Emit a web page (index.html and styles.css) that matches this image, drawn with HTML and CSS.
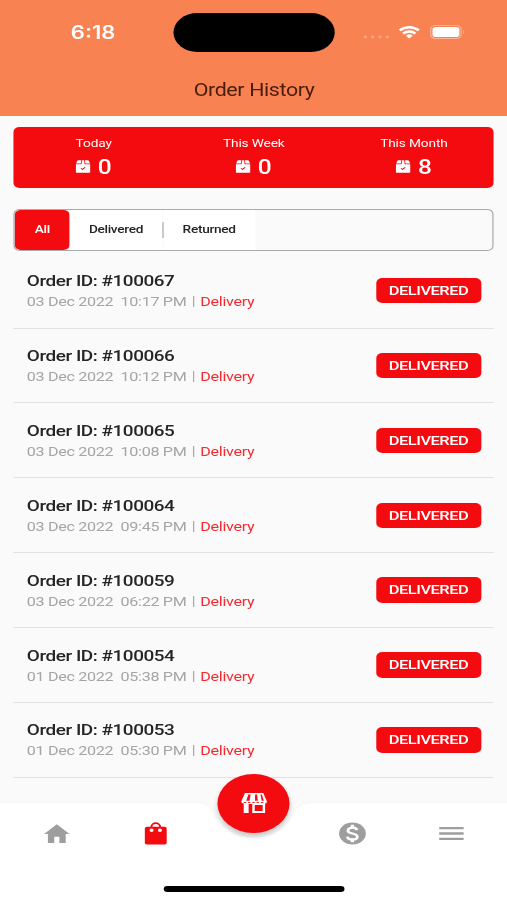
FILE: index.html
```html
<!DOCTYPE html>
<html lang="en">
<head>
<meta charset="utf-8">
<title>Order History</title>
<link rel="stylesheet" href="styles.css">
</head>
<body>
<svg class="defs" width="0" height="0">
  <symbol id="box" viewBox="0 0 12 13">
    <path fill="#fff" d="M2 0.300h2.600l-.5 3.300H0.300L1.200 1Q1.400 .3 2 .3zM7.400 .3H10q.6 0 .8.7l.9 2.600H7.900zM0 4.200h12v7.600q0 .9-.9.9H.9Q0 12.700 0 11.800zM5.200 .3h1.600l.5 4.100h-2.600z"/>
    <path fill="none" stroke="#f40b10" stroke-width=".9" d="M4.300 8.300l1.200 1 2.200-2"/>
  </symbol>
</svg>
<div class="screen">
  <header class="top">
    <div class="status">
      <span class="time">6:18</span>
      <div class="island"></div>
      <div class="signals">
        <svg class="dots" width="22" height="4" viewBox="0 0 22 4"><g fill="#fff" opacity=".3"><circle cx="2" cy="2" r="1.400"/><circle cx="8" cy="2" r="1.400"/><circle cx="14" cy="2" r="1.400"/><circle cx="20" cy="2" r="1.400"/></g></svg>
        <svg class="wifi" width="18" height="14" viewBox="0 0 18 14"><g fill="none" stroke="#fff" stroke-width="2.500"><path d="M1.200 5.300a11.200 11.200 0 0 1 15.600 0"/><path d="M4 8.600a7.200 7.200 0 0 1 10 0"/></g><path fill="#fff" d="M9 13.500L6.200 10.700a4 4 0 0 1 5.600 0z"/></svg>
        <svg class="battery" width="29" height="14" viewBox="0 0 29 14"><rect x=".5" y=".5" width="25" height="13" rx="4" fill="none" stroke="#fff" opacity=".4"/><rect x="2" y="2" width="22" height="10" rx="2.800" fill="#fff"/><path d="M27 5q1.600 2 0 4z" fill="#fff" opacity=".5"/></svg>
      </div>
    </div>
    <h1>Order History</h1>
  </header>
  <main>
    <section class="stats">
      <div class="stat"><span class="label">Today</span><span class="value"><svg width="12" height="13"><use href="#box"/></svg>0</span></div>
      <div class="stat"><span class="label">This Week</span><span class="value"><svg width="12" height="13"><use href="#box"/></svg>0</span></div>
      <div class="stat"><span class="label">This Month</span><span class="value"><svg width="12" height="13"><use href="#box"/></svg>8</span></div>
    </section>
    <nav class="filters">
      <span class="tab active">All</span><span class="tab delivered">Delivered</span><i></i><span class="tab returned">Returned</span>
    </nav>
    <ul class="orders">
      <li><div><b>Order ID: #100067</b><p>03 Dec 2022&nbsp; 10:17 PM <i></i> <em>Delivery</em></p></div><span class="badge">DELIVERED</span></li>
      <li><div><b>Order ID: #100066</b><p>03 Dec 2022&nbsp; 10:12 PM <i></i> <em>Delivery</em></p></div><span class="badge">DELIVERED</span></li>
      <li><div><b>Order ID: #100065</b><p>03 Dec 2022&nbsp; 10:08 PM <i></i> <em>Delivery</em></p></div><span class="badge">DELIVERED</span></li>
      <li><div><b>Order ID: #100064</b><p>03 Dec 2022&nbsp; 09:45 PM <i></i> <em>Delivery</em></p></div><span class="badge">DELIVERED</span></li>
      <li><div><b>Order ID: #100059</b><p>03 Dec 2022&nbsp; 06:22 PM <i></i> <em>Delivery</em></p></div><span class="badge">DELIVERED</span></li>
      <li><div><b>Order ID: #100054</b><p>01 Dec 2022&nbsp; 05:38 PM <i></i> <em>Delivery</em></p></div><span class="badge">DELIVERED</span></li>
      <li><div><b>Order ID: #100053</b><p>01 Dec 2022&nbsp; 05:30 PM <i></i> <em>Delivery</em></p></div><span class="badge">DELIVERED</span></li>
    </ul>
  </main>
  <footer class="bottom">
    <svg class="notch" width="415" height="97" viewBox="0 0 415 97"><path fill="#fff" d="M0 0H156.700Q171.700 0 174.100 9A34.800 34.800 0 0 0 241.300 9Q243.700 0 258.700 0H415V97H0z"/></svg>
    <div class="items">
      <svg width="25" height="25" viewBox="0 0 24 24"><path fill="#9e9e9e" d="M10 21v-6h4v6h5v-8.500h3L12 3 2 12.500h3V21z"/></svg>
      <svg width="25" height="25" viewBox="0 0 24 24"><path fill="#f40b10" fill-rule="evenodd" d="M19 5.500H16.200A4.200 4.200 0 0 0 7.800 5.500H5Q3.400 5.500 3.400 7.100V20.900Q3.400 22.500 5 22.500H19Q20.600 22.500 20.600 20.900V7.100Q20.600 5.500 19 5.500zM12 2.900a2.600 2.600 0 0 1 2.600 2.600H9.400a2.600 2.600 0 0 1 2.600-2.600zM8.700 7.300a1.600 1.600 0 1 1 0 3.200 1.600 1.600 0 0 1 0-3.200zM15.300 7.300a1.600 1.600 0 1 1 0 3.200 1.600 1.600 0 0 1 0-3.200z"/></svg>
      <span></span>
      <svg width="25" height="25" viewBox="0 0 24 24"><circle cx="12" cy="12" r="10.500" fill="#9e9e9e"/><path fill="none" stroke="#fff" stroke-width="2.200" d="M15.700 8.800Q15 6.300 12 6.300T8.400 9Q8.400 11.100 12 12T15.800 15Q15.800 17.700 12 17.700T8 15"/><path stroke="#fff" stroke-width="2.600" d="M12 3.600V7M12 17V20.400"/></svg>
      <svg width="25" height="25" viewBox="0 0 24 24"><path stroke="#9e9e9e" stroke-width="2.200" d="M2.400 6.800H21.600M2.400 12H21.600M2.400 17.200H21.600"/></svg>
    </div>
    <div class="fab"><svg width="22" height="22" viewBox="0 0 22 22"><path fill="#fff" fill-rule="evenodd" d="M3.500 1H18.500L21.500 9.500Q21.500 11.500 20 11.500V21H9.500V12H6.500V21H2.500V11.500Q.5 11.500 .5 9.500zM6.300 2.500L4.600 8.800H7.200L8.200 2.500zM11.800 2.500V8.800H14L13.400 2.500zM16.200 2.500L17.200 8.800H19L17.300 2.500zM11.500 13V19H18V13z"/><path stroke="#f40b10" stroke-width=".8" stroke-dasharray="2 1.500" d="M2.500 10.500H20"/></svg></div>
    <div class="homebar"></div>
  </footer>
</div>
</body>
</html>
```
FILE: styles.css
```css
* { box-sizing: border-box; }
body { margin: 0; width: 507px; height: 900px; overflow: hidden; background: #fafafa; }
.defs { position: absolute; }
/* Layout is 415 units wide and stretched to the full viewport width. */
.screen {
  width: 415px; height: 900px;
  display: flex; flex-direction: column;
  transform: scaleX(1.22169); transform-origin: 0 0;
  font-family: Roboto, sans-serif; color: #252525; background: #fafafa;
}
.top { height: 115.500px; background: #f98253; flex: none; }
.status { height: 64px; display: grid; grid-template-columns: 142px 132px 141px; align-items: center; }
.time { font: 600 18px/20px Inter, sans-serif; color: #fff; padding: 1px 0 0 58px; }
.island { height: 39px; border-radius: 20px; background: #000; }
.signals { display: flex; align-items: center; padding-left: 23px; }
.dots { margin-top: 9px; }
.wifi { margin-left: 7px; }
.battery { margin-left: 7.500px; }
h1 { margin: 0; padding-left: 1px; text-align: center; font-size: 17.500px; letter-spacing: -.3px; line-height: 53px; font-weight: 400; color: #4a1c0c; }
main { flex: 1; padding: 11px 10.700px 0 11.200px; }
.stats { height: 61px; border-radius: 5px; background: #f40b10; color: #fff; display: grid; grid-template-columns: repeat(3, 1fr); }
.stat { display: flex; flex-direction: column; align-items: center; padding-top: 9px; }
.label { font-size: 11.200px; letter-spacing: -.1px; line-height: 15px; }
.value { display: flex; align-items: center; gap: 6px; font-size: 20px; line-height: 32px; font-weight: 500; }
.filters { margin-top: 21.500px; height: 42px; border: 1px solid #aaa; border-radius: 5px; display: flex; align-items: center; font-size: 11.200px; letter-spacing: -.25px; font-weight: 500; overflow: hidden; }
.tab { height: 40px; line-height: 40px; text-align: center; background: #fff; }
.active { width: 45px; background: #f40b10; color: #fff; border-radius: 5px; }
.delivered { width: 75.500px; }
.filters i { width: 1px; height: 16px; background: #999; }
.returned { width: 75px; }
.orders { list-style: none; margin: 2.700px 0 0; padding: 0; }
.orders li { height: 74.900px; border-bottom: 1.500px solid #e2e2e2; display: flex; align-items: center; justify-content: space-between; padding: 0 10.300px 0 10.800px; }
.orders li > div { padding-top: 2px; }
.orders b { display: block; font-size: 15.500px; letter-spacing: -.37px; line-height: 21px; font-weight: 500; }
.orders p { margin: 0; font-size: 13.200px; letter-spacing: -.26px; line-height: 20px; color: #a5a5a5; white-space: nowrap; }
.orders p i { display: inline-block; width: 1px; height: 11px; background: #aaa; margin: 0 2.200px; vertical-align: -1px; }
.orders em { font-style: normal; color: #f42a30; }
.badge { width: 86.500px; height: 25.500px; line-height: 25.500px; text-align: center; border-radius: 5px; background: #f40b10; color: #fff; font-size: 13.500px; letter-spacing: -.4px; font-weight: 500; }
.bottom { position: absolute; left: 0; top: 803px; width: 415px; height: 97px; }
.notch { position: absolute; left: 0; top: 0; filter: drop-shadow(0 -1px 1px rgba(0,0,0,.02)); }
.items { position: relative; display: grid; grid-template-columns: repeat(5, 80.700px); justify-content: center; justify-items: center; padding: 18px 0 0 .6px; }
.fab { position: absolute; left: 178.300px; top: -29.500px; width: 59px; height: 59px; border-radius: 50%; background: #f40b10; box-shadow: 0 3px 5px rgba(0,0,0,.23); display: flex; align-items: center; justify-content: center; }
.homebar { position: absolute; left: 134px; top: 83px; width: 148px; height: 5.500px; border-radius: 3px; background: #000; }
```
